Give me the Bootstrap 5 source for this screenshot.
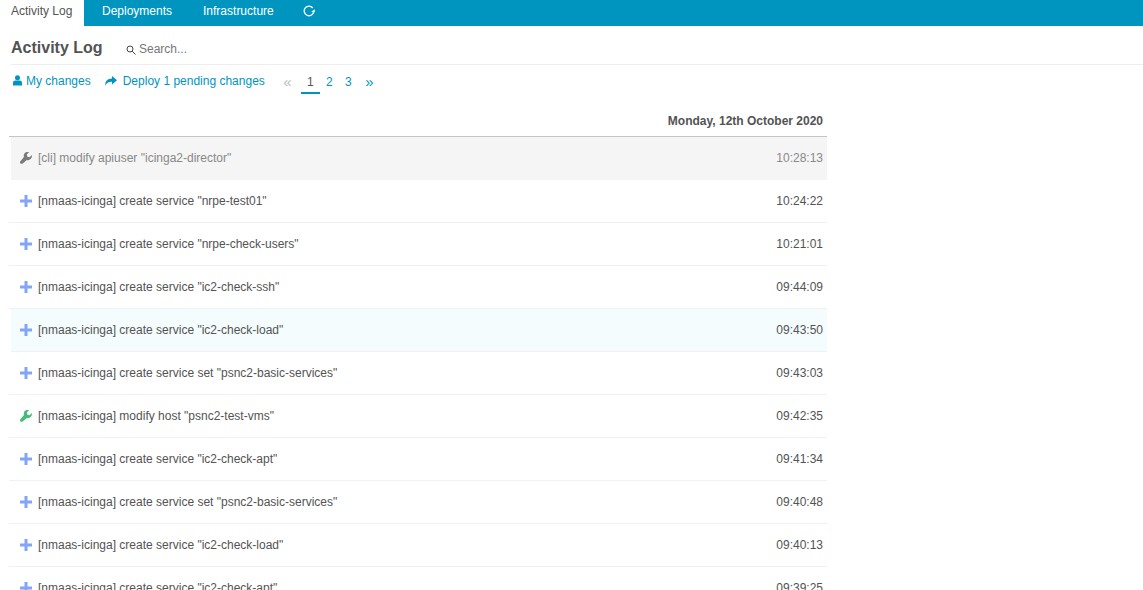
<!DOCTYPE html>
<html lang="en">
<head>
    <meta charset="UTF-8">
    <meta name="viewport" content="width=device-width, initial-scale=1.0">
    <title>Activity Log</title>
    <link href="https://cdn.jsdelivr.net/npm/bootstrap@5.3.0/dist/css/bootstrap.min.css" rel="stylesheet">
    <style>
        html, body {
            height: 590px;
            overflow: hidden;
        }

        body {
            font-family: "Liberation Sans", Arial, sans-serif;
            font-size: 12px;
            color: #535353;
            background: #fff;
        }

        a {
            text-decoration: none;
        }

        svg {
            fill: currentColor;
            display: block;
        }

        .tab-bar {
            height: 26px;
            background: #0095bf;
            padding: 0;
        }

        .tab-bar a {
            color: #fff;
            height: 26px;
            line-height: 23px;
            padding: 0 15px;
        }

        .tab-bar a:first-child {
            padding: 0 11px;
            width: 84px;
            margin-right: 3px;
        }

        .tab-bar a:nth-child(3) {
            margin-left: 1px;
        }

        .tab-bar a.is-current {
            background: #fff;
            color: #535353;
        }

        .tab-bar svg {
            width: 12px;
            height: 12px;
            margin-top: 5px;
            margin-left: -1px;
        }

        .head-row {
            margin: 0 0 0 11px;
            height: 39px;
            padding-top: 5px;
            border-bottom: 1px solid #eee;
        }

        .head-row h1 {
            font-size: 16px;
            font-weight: 700;
            margin: 0;
            width: 115px;
            color: #535353;
        }

        .search-box {
            color: #777;
            margin-top: 3px;
            gap: 3px;
        }

        .search-box svg {
            width: 10px;
            height: 10px;
            margin-top: 2px;
            color: #444;
            fill: none;
            stroke: currentColor;
            stroke-width: 1;
        }

        .action-row {
            height: 33px;
            padding-bottom: 2px;
            margin-left: 13px;
        }

        .action-row a {
            color: #0095bf;
        }

        .action-row .deploy-link {
            margin-left: 13px;
        }

        .deploy-link svg {
            margin-right: 6px;
        }

        .pager-box {
            margin-left: 13px;
        }

        .pager-box a, .pager-box span {
            display: block;
            width: 19px;
            height: 27px;
            line-height: 30px;
            text-align: center;
            color: #0095bf;
        }

        .pager-box .is-off {
            color: #bbb;
            margin-right: 4px;
        }

        .pager-box .is-off, .pager-box .is-arrow {
            font-size: 15px;
        }

        .pager-box .is-arrow {
            margin-left: 2px;
        }

        .pager-box .is-on {
            color: #535353;
            border-bottom: 2px solid #0095bf;
        }

        .log-wrap {
            width: 818px;
            margin-left: 9px;
            padding-top: 11px;
        }

        .day-head {
            height: 28px;
            line-height: 25px;
            text-align: right;
            font-weight: 700;
            padding-right: 4px;
            border-bottom: 1px solid #c4c4c4;
        }

        .log-row {
            height: 43px;
            padding-left: 11px;
            padding-right: 4px;
            border-bottom: 1px solid #f1f1f1;
        }

        .log-row svg {
            width: 12px;
            height: 12px;
            margin-right: 6px;
            flex: none;
        }

        .row-time {
            margin-left: auto;
        }

        .row-muted {
            background: #f5f5f5;
            color: #888;
            border-bottom: 0;
            margin-left: 2px;
            padding-left: 9px;
            padding-bottom: 1px;
        }

        .row-hover {
            background: #f4fcfd;
            margin-left: 2px;
            padding-left: 9px;
        }

        .ico-plus {
            color: #82a5f8;
        }

        .ico-green {
            color: #44bb77;
        }

        .ico-grey {
            color: #7a7a7a;
        }
    </style>
</head>
<body>

    <nav class="tab-bar d-flex">
        <a href="#" class="is-current">Activity Log</a>
        <a href="#">Deployments</a>
        <a href="#">Infrastructure</a>
        <a href="#"><svg viewBox="0 0 12 12" style="fill:none;stroke:currentColor;stroke-width:1.3"><path d="M9.800 3A4.800 4.800 0 1 0 10.700 7"/><path d="M12 4.200 11.500 7.600 8.200 6.700z" style="fill:currentColor;stroke:none"/></svg></a>
    </nav>

    <div class="head-row d-flex align-items-center">
        <h1>Activity Log</h1>
        <div class="search-box d-flex align-items-center">
            <svg viewBox="0 0 10 10"><circle cx="4" cy="4" r="3"/><path d="M6.200 6.200 9.500 9.500"/></svg>
            <span>Search...</span>
        </div>
    </div>

    <div class="action-row d-flex align-items-center">
        <a href="#" class="d-flex align-items-center">
            <svg viewBox="0 0 10 12" width="9" height="11" class="me-1"><circle cx="5" cy="3" r="2.800"/><path d="M0 11.500V8.500C0 6.800 1.400 6 2.600 6h4.800C8.600 6 10 6.800 10 8.500v3z"/></svg>
            My changes
        </a>
        <a href="#" class="d-flex align-items-center deploy-link">
            <svg viewBox="0 0 13 12" width="13" height="12"><path d="M8 1l5 4.200L8 9.400V6.800C5 6.800 2.600 7.600 1.500 11 .7 6.400 3.500 3.600 8 3.600z"/></svg>
            Deploy 1 pending changes
        </a>
        <div class="pager-box d-flex">
            <span class="is-off">&laquo;</span>
            <a href="#" class="is-on">1</a>
            <a href="#">2</a>
            <a href="#">3</a>
            <a href="#" class="is-arrow">&raquo;</a>
        </div>
    </div>

    <div class="log-wrap">
        <div class="day-head">Monday, 12th October 2020</div>
        <div id="logRows"></div>
    </div>

    <script>
        const plusIcon = '<svg class="ico-plus" viewBox="0 0 12 12"><path d="M4.500 0h3v4.500H12v3H7.500V12h-3V7.500H0v-3h4.500z"/></svg>';
        const wrenchPath = '<path d="M11.800 3.100 9.600 5.300 7.400 4.700 6.800 2.500 9 .3C7.400-.3 5.600.1 4.600 1.300 3.700 2.300 3.500 3.800 4 5L.4 9.200c-.6.700-.5 1.600.1 2.200.6.600 1.600.600 2.200 0L6.800 7.900c1.300.500 2.800.2 3.800-.8 1.100-1 1.600-2.600 1.200-4z"/>';
        const rows = [
            ['grey', '[cli] modify apiuser "icinga2-director"', '10:28:13', 'row-muted'],
            ['plus', '[nmaas-icinga] create service "nrpe-test01"', '10:24:22'],
            ['plus', '[nmaas-icinga] create service "nrpe-check-users"', '10:21:01'],
            ['plus', '[nmaas-icinga] create service "ic2-check-ssh"', '09:44:09'],
            ['plus', '[nmaas-icinga] create service "ic2-check-load"', '09:43:50', 'row-hover'],
            ['plus', '[nmaas-icinga] create service set "psnc2-basic-services"', '09:43:03'],
            ['green', '[nmaas-icinga] modify host "psnc2-test-vms"', '09:42:35'],
            ['plus', '[nmaas-icinga] create service "ic2-check-apt"', '09:41:34'],
            ['plus', '[nmaas-icinga] create service set "psnc2-basic-services"', '09:40:48'],
            ['plus', '[nmaas-icinga] create service "ic2-check-load"', '09:40:13'],
            ['plus', '[nmaas-icinga] create service "ic2-check-apt"', '09:39:25']
        ];

        const html = rows.map(r => {
            const icon = r[0] === 'plus' ? plusIcon
                : `<svg class="ico-${r[0]}" viewBox="0 0 12 12">${wrenchPath}</svg>`;
            return `<div class="log-row d-flex align-items-center ${r[3] || ''}">${icon}<span>${r[1]}</span><span class="row-time">${r[2]}</span></div>`;
        });
        document.getElementById('logRows').innerHTML = html.join('');
    </script>

    <script src="https://cdn.jsdelivr.net/npm/bootstrap@5.3.0/dist/js/bootstrap.bundle.min.js"></script>
</body>
</html>
